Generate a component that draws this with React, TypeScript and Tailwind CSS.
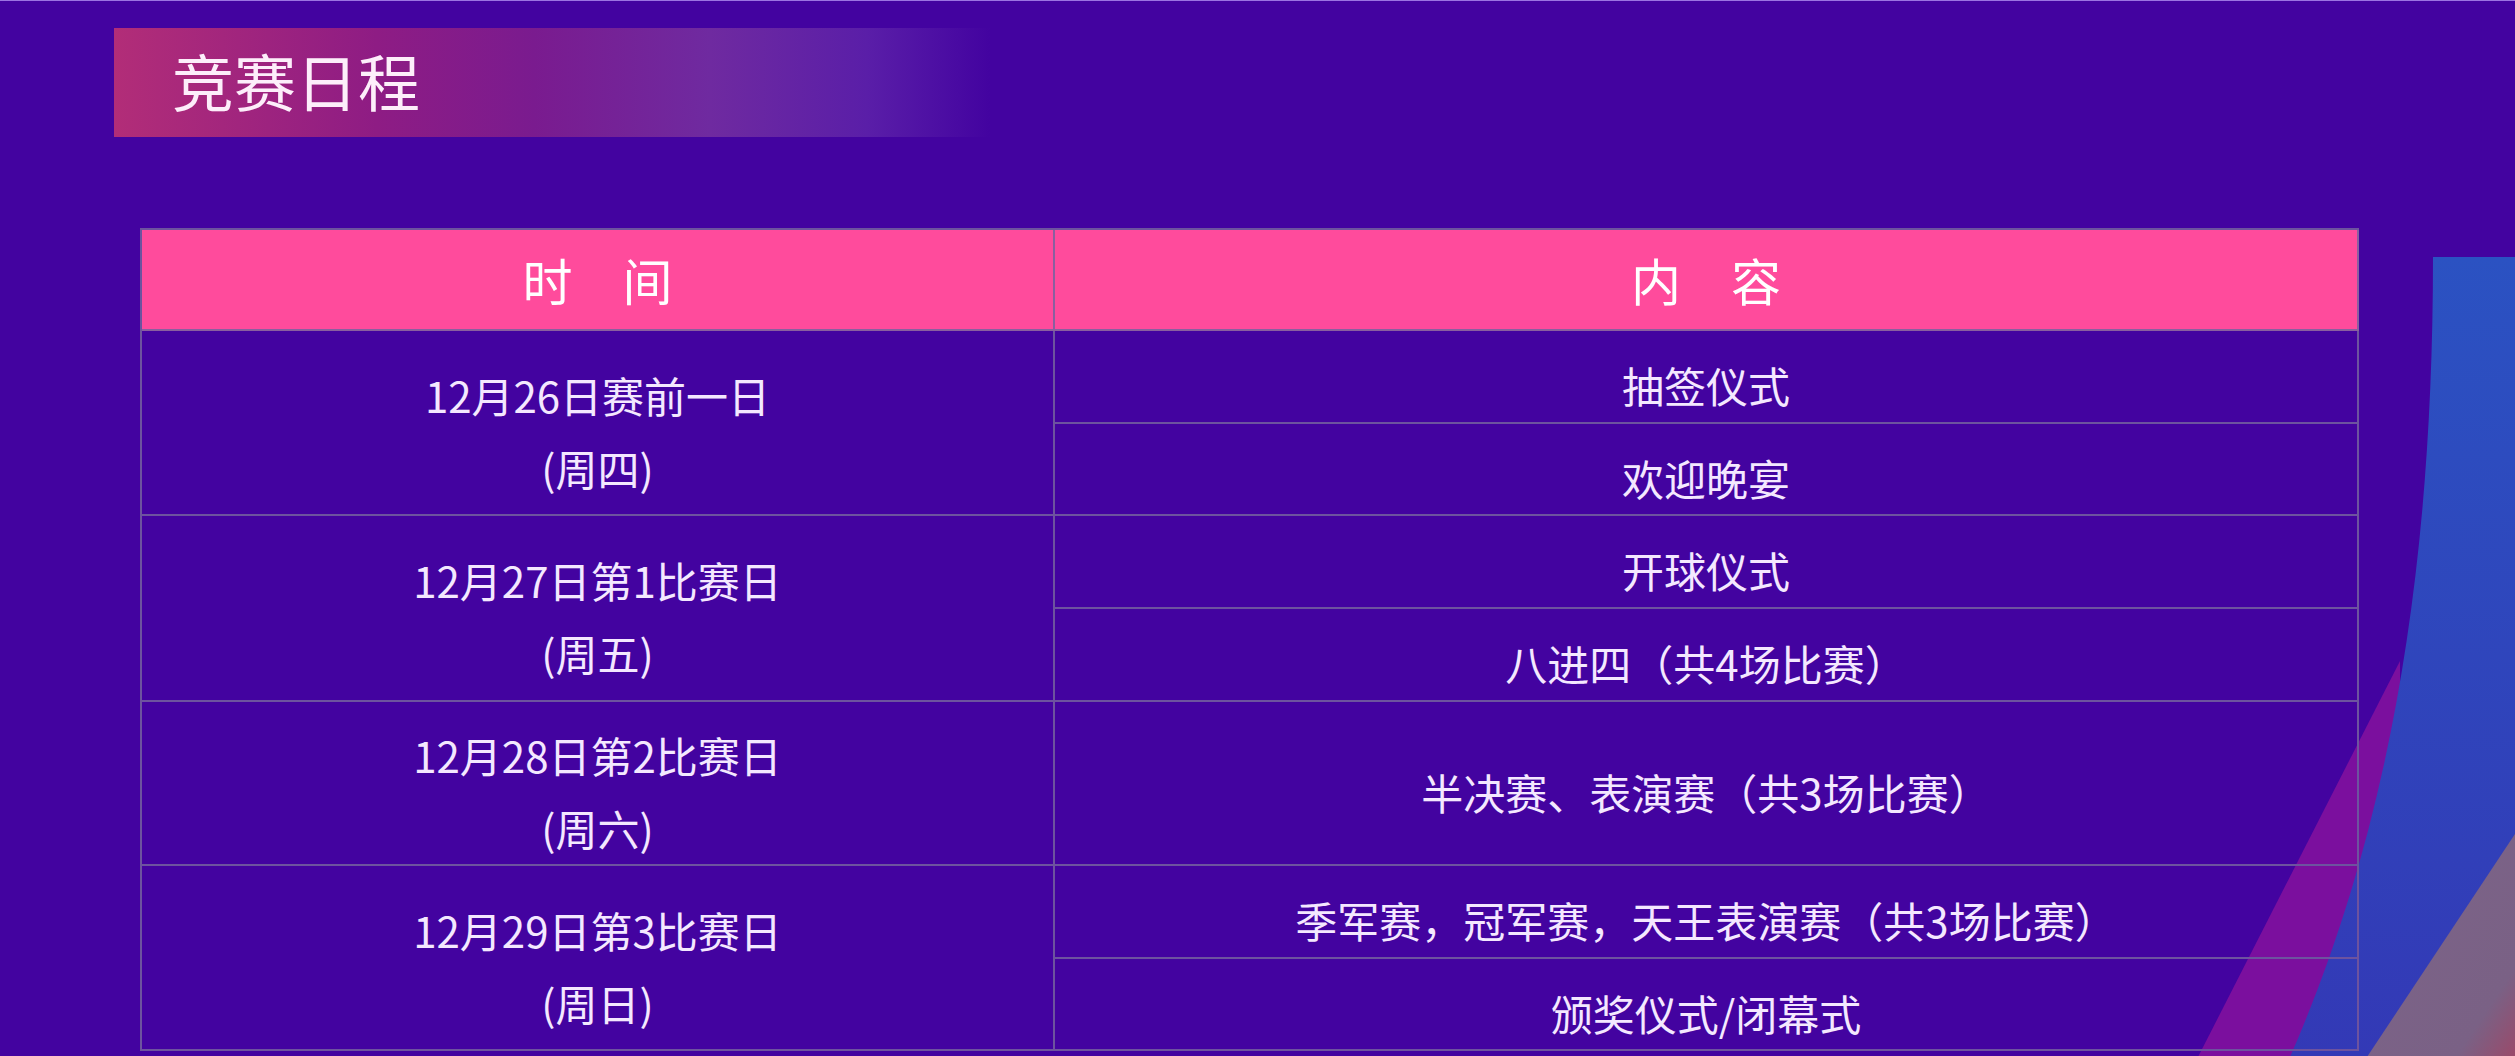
import React from 'react';

interface ScheduleDay {
  date: string;
  weekday: string;
  items: string[];
}

const schedule: ScheduleDay[] = [
  { date: '12月26日赛前一日', weekday: '(周四)', items: ['抽签仪式', '欢迎晚宴'] },
  { date: '12月27日第1比赛日', weekday: '(周五)', items: ['开球仪式', '八进四（共4场比赛）'] },
  { date: '12月28日第2比赛日', weekday: '(周六)', items: ['半决赛、表演赛（共3场比赛）'] },
  { date: '12月29日第3比赛日', weekday: '(周日)', items: ['季军赛，冠军赛，天王表演赛（共3场比赛）', '颁奖仪式/闭幕式'] },
];

const leftSpans = ['row-span-2', 'row-span-2', 'row-span-1', 'row-span-2'];

// Decorative shapes in the lower right corner
const CornerShapes = () => (
  <svg
    className="absolute inset-0 pointer-events-none"
    width="2515"
    height="1056"
    viewBox="0 0 2515 1056"
  >
    <defs>
      <linearGradient id="blueFill" x1="0" y1="0" x2="0" y2="1">
        <stop offset="0" stopColor="#2b52c2" />
        <stop offset="1" stopColor="#3339b6" />
      </linearGradient>
      <linearGradient id="mauveFill" x1="0" y1="0" x2="1" y2="1">
        <stop offset="0" stopColor="#7c6489" />
        <stop offset="0.8" stopColor="#7a6185" />
        <stop offset="1" stopColor="#9a4a6a" />
      </linearGradient>
    </defs>
    <polygon points="2400,660 2198,1056 2400,1056" fill="#7b0f9e" />
    <path d="M2433 256 L2515 256 L2515 1056 L2290 1056 C2380 850 2433 600 2433 256 Z" fill="url(#blueFill)" />
    <polygon points="2515,833 2367,1056 2515,1056" fill="url(#mauveFill)" />
  </svg>
);

export default function App() {
  return (
    <div className="relative w-[2515px] h-[1056px] overflow-hidden bg-[#4303a0] border-t border-[#9c74e2] font-['Noto_Sans_CJK_SC','Noto_Sans',sans-serif]">
      <CornerShapes />

      <div className="relative">
        {/* Title band */}
        <div className="ml-[114px] mt-[27px] w-[876px] h-[109px] flex items-center pl-[58px] pb-[6px] bg-[linear-gradient(90deg,#b22d78_0%,#8e1c84_30%,#7a1b8f_48%,#6f2aa0_68%,#5a1ea8_86%,#4303a0_100%)]">
          <span className="text-[62px] leading-none text-[#fdeefa]">竞赛日程</span>
        </div>

        {/* Schedule table */}
        <div className="ml-[140px] mt-[91px] w-[2219px] grid grid-cols-[913px_1304px] grid-rows-[101px_93px_92px_93px_93px_164px_93px_92px] border-t-2 border-l-2 border-[#6d539f] text-[#f4e8ff]">
          <div className="flex items-center justify-center bg-[#ff4b9c] border-r-2 border-b-2 border-[#8a5f9f] text-[50px] text-white">
            时　间
          </div>
          <div className="flex items-center justify-center bg-[#ff4b9c] border-r-2 border-b-2 border-[#8a5f9f] text-[50px] text-white">
            内　容
          </div>

          {schedule.map((day, i) => (
            <React.Fragment key={day.date}>
              <div
                className={`${leftSpans[i]} col-start-1 flex flex-col items-center justify-center pt-[16px] border-r-2 border-b-2 border-[#6d539f] text-[42px] leading-[73px]`}
              >
                <span>{day.date}</span>
                <span>{day.weekday}</span>
              </div>
              {day.items.map((item) => (
                <div
                  key={item}
                  className="col-start-2 flex items-center justify-center pt-[16px] border-r-2 border-b-2 border-[#6d539f] text-[42px] leading-[73px]"
                >
                  {item}
                </div>
              ))}
            </React.Fragment>
          ))}
        </div>
      </div>
    </div>
  );
}
